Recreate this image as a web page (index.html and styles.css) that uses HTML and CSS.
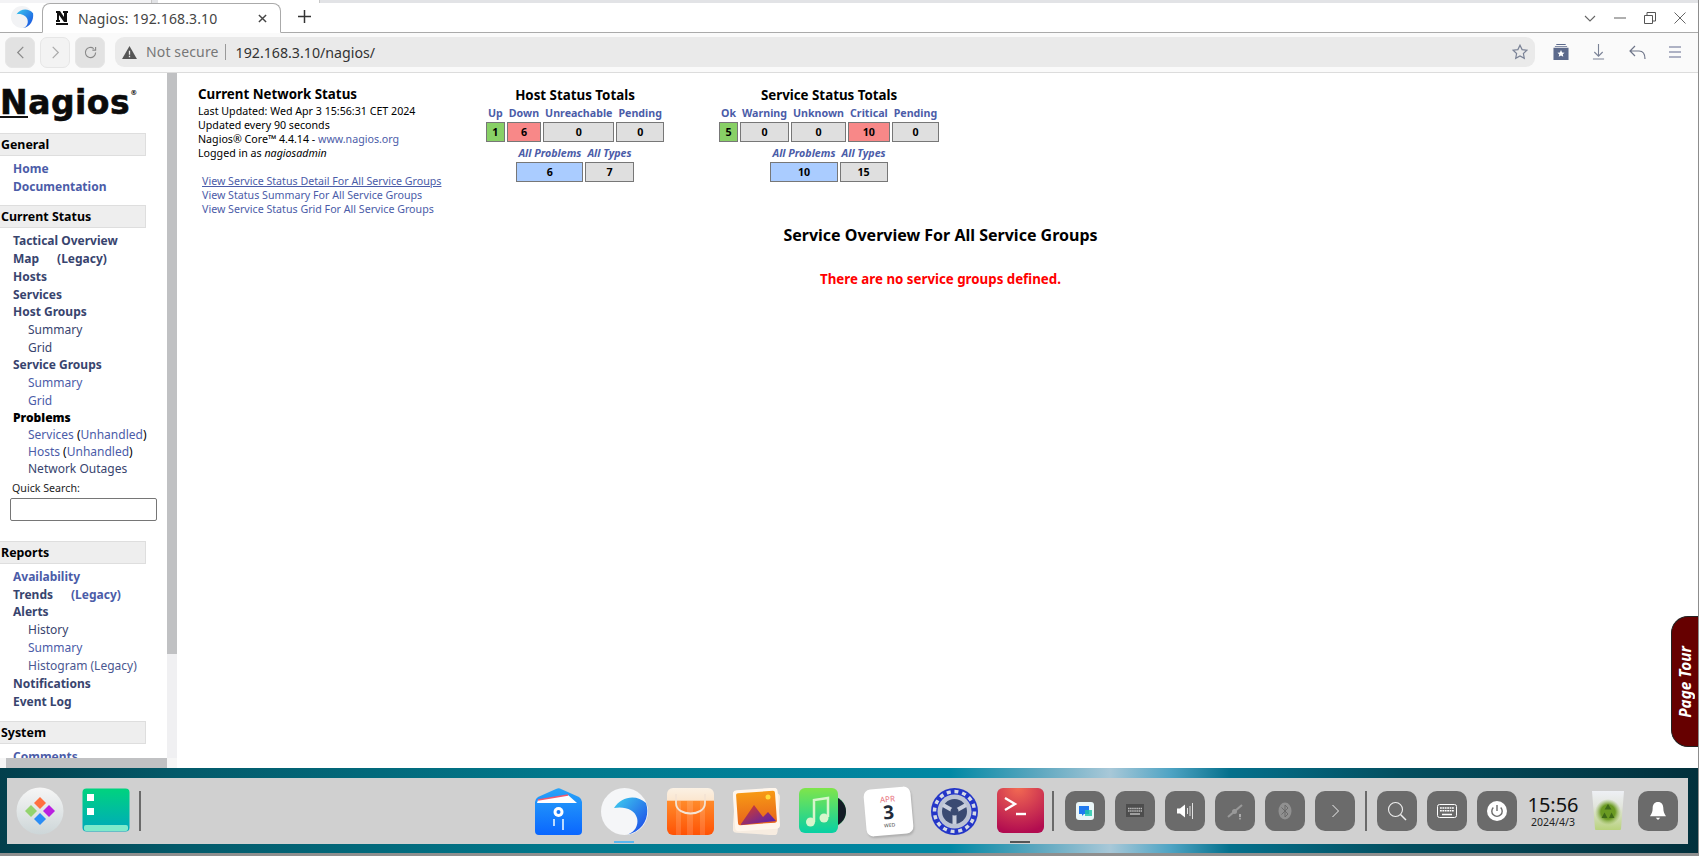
FILE: index.html
```html
<!DOCTYPE html>
<html lang="en">
<head>
<meta charset="utf-8">
<title>Nagios: 192.168.3.10</title>
<link rel="stylesheet" href="styles.css">
</head>
<body>
<div class="app">
  <div class="strip"><i class="s1"></i><i class="s2"></i><i class="s3"></i></div>
  <div class="tabbar">
    <svg class="brand" viewBox="0 0 26 26"><defs><linearGradient id="bw" x1="0" y1="0" x2="1" y2="1"><stop offset="0" stop-color="#3bc8ee"/><stop offset="1" stop-color="#1546e0"/></linearGradient></defs><circle cx="13" cy="13" r="12" fill="#f2f3f5"/><path d="M7 10C11 4 20 3 25 9c1 7-3 15-11 16 4-1 6-5 5-9-1-4-6-7-12-6z" fill="url(#bw)"/></svg>
    <div class="tab">
      <svg class="favicon" viewBox="0 0 12 14"><path d="M0 0h4l4 6V2H7V0h5v2h-1v9H8L3 4v5h1v2H0V9h1V2H0zM0 12h12v2H0z" fill="#111"/></svg>
      <span class="tab-title">Nagios: 192.168.3.10</span>
      <svg class="tab-close" viewBox="0 0 10 10"><path d="M1 1l8 8M9 1l-8 8" stroke="#444" stroke-width="1.6"/></svg>
    </div>
    <svg class="plus" viewBox="0 0 14 14"><path d="M7 0v14M0 7h14" stroke="#333" stroke-width="1.6"/></svg>
    <div class="winctl">
      <svg class="w-ic" viewBox="0 0 12 12"><path d="M1 4l5 5 5-5" fill="none" stroke="#666" stroke-width="1.1"/></svg>
      <svg class="w-ic" viewBox="0 0 14 12"><path d="M0 6h14" stroke="#555" stroke-width="1.1"/></svg>
      <svg class="w-ic" viewBox="0 0 12 12"><path d="M.5 3.5h8v8h-8zM3 3.500V.5h8.500v8.500H8.500" fill="none" stroke="#555"/></svg>
      <svg class="w-ic" viewBox="0 0 12 12"><path d="M.5.5l11 11M11.500.5l-11 11" stroke="#666" stroke-width="1"/></svg>
    </div>
  </div>
  <div class="toolbar">
    <button class="nav-btn on"><svg viewBox="0 0 8 14"><path d="M7 1L1 7l6 6" fill="none" stroke="#888" stroke-width="1.3"/></svg></button>
    <button class="nav-btn off"><svg viewBox="0 0 8 14"><path d="M1 1l6 6-6 6" fill="none" stroke="#aaa" stroke-width="1.3"/></svg></button>
    <button class="nav-btn on"><svg viewBox="0 0 14 14"><path d="M12.500 7A5.500 5.500 0 1 1 10.500 2.800M12.500 1v3.500H9" fill="none" stroke="#888" stroke-width="1.2"/></svg></button>
    <div class="urlbar">
      <svg class="warn" viewBox="0 0 16 14"><path d="M8 0l8 14H0z" fill="#555"/><path d="M7.300 5h1.400v4.500H7.300zM7.300 10.500h1.400V12H7.300z" fill="#eaeaea"/></svg>
      <span class="insecure">Not secure</span>
      <span class="url">192.168.3.10/nagios/</span>
      <svg class="star" viewBox="0 0 16 16"><path d="M8 1.200l2.100 4.400 4.800.6-3.500 3.300.9 4.800L8 12l-4.300 2.300.9-4.800L1.100 6.200l4.800-.6z" fill="none" stroke="#7a8296" stroke-width="1.200"/></svg>
    </div>
    <div class="tools">
      <svg class="t1" viewBox="0 0 16 17"><path d="M3 0h10v1H3zM1.500 2h13v1h-13zM0 4h16v13H0z" fill="#5c6a8c"/><path d="M8 6.500l1.200 2.400 2.600.3-1.900 1.800.5 2.600L8 12.300l-2.400 1.300.5-2.600-1.900-1.800 2.600-.3z" fill="#fff"/></svg>
      <svg class="t2" viewBox="0 0 14 17"><path d="M7 0v13M2.500 8.500L7 13l4.500-4.500M1 16h12" fill="none" stroke="#7a8296" stroke-width="1.200"/></svg>
      <svg class="t3" viewBox="0 0 17 15"><path d="M6 1L1 6l5 5M1 6h9c4 0 6 3 6 8" fill="none" stroke="#6d7488" stroke-width="1.200"/></svg>
      <svg class="t4" viewBox="0 0 12 12"><path d="M0 1h12M0 6h12M0 11h12" stroke="#aeb2c4" stroke-width="2"/></svg>
    </div>
  </div>

  <div class="page">
    <aside class="side">
      <div class="side-top">
        <nav class="nav">
          <div class="logo"><span class="logo-n">N</span>agios<sup class="logo-r">®</sup></div>

          <h2 class="sec">General</h2>
          <ul class="list pad4 gap9">
            <li class="m"><a>Home</a></li>
            <li class="m"><a>Documentation</a></li>
          </ul>

          <h2 class="sec">Current Status</h2>
          <ul class="list pad4">
            <li class="m"><a class="dk">Tactical Overview</a></li>
            <li class="m"><a class="dk">Map</a><a class="dk leg">(Legacy)</a></li>
            <li class="m"><a class="dk">Hosts</a></li>
            <li class="m tight"><a class="dk">Services</a></li>
            <li class="m"><a class="dk">Host Groups</a></li>
            <li class="s"><a class="dk">Summary</a></li>
            <li class="s tight"><a class="dk">Grid</a></li>
            <li class="m"><a class="dk">Service Groups</a></li>
            <li class="s"><a>Summary</a></li>
            <li class="s tight"><a>Grid</a></li>
            <li class="m tight"><b class="blk">Problems</b></li>
            <li class="s tight"><a>Services</a> (<a>Unhandled</a>)</li>
            <li class="s tight"><a>Hosts</a> (<a>Unhandled</a>)</li>
            <li class="s tight"><a class="dk">Network Outages</a></li>
          </ul>
          <form class="search">
            <label class="search-label" for="q">Quick Search:</label>
            <input id="q" class="search-in" type="text">
          </form>

          <h2 class="sec">Reports</h2>
          <ul class="list pad4 gap10">
            <li class="m mid"><a>Availability</a></li>
            <li class="m mid"><a class="dk">Trends</a><a class="leg">(Legacy)</a></li>
            <li class="m"><a class="dk">Alerts</a></li>
            <li class="s"><a class="dk">History</a></li>
            <li class="s"><a>Summary</a></li>
            <li class="s mid"><a class="dk2">Histogram (Legacy)</a></li>
            <li class="m"><a class="dk">Notifications</a></li>
            <li class="m"><a class="dk">Event Log</a></li>
          </ul>

          <h2 class="sec">System</h2>
          <ul class="list pad4">
            <li class="m"><a>Comments</a></li>
          </ul>
        </nav>
        <div class="vtrack"><div class="vthumb"></div></div>
      </div>
      <div class="htrack"><div class="hthumb"></div></div>
    </aside>

    <main class="main">
      <div class="top">
        <section class="info">
          <h1 class="info-title">Current Network Status</h1>
          <p class="ln">Last Updated: Wed Apr 3 15:56:31 CET 2024</p>
          <p class="ln">Updated every 90 seconds</p>
          <p class="ln">Nagios® Core™ 4.4.14 - <a>www.nagios.org</a></p>
          <p class="ln">Logged in as <i>nagiosadmin</i></p>
          <div class="links">
            <a class="ln u">View Service Status Detail For All Service Groups</a>
            <a class="ln">View Status Summary For All Service Groups</a>
            <a class="ln">View Service Status Grid For All Service Groups</a>
          </div>
        </section>

        <section class="totals">
          <h2 class="t-title">Host Status Totals</h2>
          <table class="t">
            <tr><th>Up</th><th>Down</th><th>Unreachable</th><th>Pending</th></tr>
            <tr><td class="ok">1</td><td class="bad">6</td><td>0</td><td>0</td></tr>
          </table>
          <table class="t t2nd">
            <tr><th class="it">All Problems</th><th class="it">All Types</th></tr>
            <tr><td class="prob">6</td><td>7</td></tr>
          </table>
        </section>

        <section class="totals svc">
          <h2 class="t-title">Service Status Totals</h2>
          <table class="t">
            <tr><th>Ok</th><th>Warning</th><th>Unknown</th><th>Critical</th><th>Pending</th></tr>
            <tr><td class="ok">5</td><td>0</td><td>0</td><td class="bad">10</td><td>0</td></tr>
          </table>
          <table class="t t2nd">
            <tr><th class="it">All Problems</th><th class="it">All Types</th></tr>
            <tr><td class="prob">10</td><td>15</td></tr>
          </table>
        </section>
      </div>
      <h2 class="overview">Service Overview For All Service Groups</h2>
      <p class="err">There are no service groups defined.</p>
      <div class="tour"><span class="tour-t">Page Tour</span></div>
    </main>
  </div>

  <div class="desk">
    <div class="dock">
      <svg class="launcher" viewBox="0 0 48 48"><defs><linearGradient id="lg" x1="0" y1="0" x2="0" y2="1"><stop offset="0" stop-color="#f6f6f6"/><stop offset="1" stop-color="#cdd6d8"/></linearGradient></defs><circle cx="24" cy="24" r="23.500" fill="url(#lg)"/><path d="M24 10l6 6-6 6-6-6z" fill="#ff7040"/><path d="M12 24l6-6 6 6-6 6z" fill="#93d36e" transform="translate(-3 0)"/><path d="M36 18l6 6-6 6-6-6z" fill="#b91fe0" transform="translate(-3 0)"/><path d="M24 26l6 6-6 6-6-6z" fill="#2a8df5"/></svg>
      <svg class="files" viewBox="0 0 48 48"><defs><linearGradient id="fg" x1="0" y1="0" x2="0" y2="1"><stop offset="0" stop-color="#00d37e"/><stop offset="1" stop-color="#00a9bd"/></linearGradient></defs><rect x=".5" y=".5" width="47" height="43" rx="4" fill="url(#fg)"/><rect x="5" y="6" width="7" height="7" fill="#fff"/><rect x="5" y="20" width="7" height="7" fill="#fff"/><rect x="2" y="37" width="44" height="6" rx="2" fill="#7eeacb"/></svg>
      <span class="sep"></span>

      <div class="apps">
        <svg class="app-ic" viewBox="0 0 47 47"><defs><linearGradient id="a1" x1="0" y1="0" x2="0" y2="1"><stop offset="0" stop-color="#29a4f8"/><stop offset="1" stop-color="#0a66ff"/></linearGradient></defs><path d="M3 9L21 1q3-1.500 5 0l18 8q3 2 3 5v29q0 4-4 4H4q-4 0-4-4V14q0-3 3-5z" fill="url(#a1)"/><path d="M2 15l1-3 30-5 9 8z" fill="#fff"/><path d="M3 12l30-5" fill="none" stroke="#f2586e" stroke-width="1.600"/><circle cx="23.500" cy="24" r="5" fill="#fff"/><circle cx="23.500" cy="24" r="2" fill="#1677f5"/><path d="M19 31v7M28 31v11" stroke="#cfe6ff" stroke-width="1.800"/></svg>
        <svg class="app-ic" viewBox="0 0 47 47"><defs><linearGradient id="a2" x1="0" y1="0" x2="1" y2="1"><stop offset="0" stop-color="#3fd0ee"/><stop offset="1" stop-color="#1a3fe8"/></linearGradient></defs><circle cx="23.500" cy="23.500" r="23.500" fill="#f5f6f8"/><path d="M13 20C20 8 36 6 45 15c4 12-1 28-20 32 8-2 13-9 11-17-2-8-12-12-23-10z" fill="url(#a2)"/></svg>
        <svg class="app-ic" viewBox="0 0 47 47"><defs><linearGradient id="a3" x1="0" y1="0" x2="0" y2="1"><stop offset="0" stop-color="#fbf1e4"/><stop offset=".26" stop-color="#fbe6cf"/><stop offset=".28" stop-color="#ff8a2a"/><stop offset="1" stop-color="#ff5205"/></linearGradient></defs><rect width="47" height="47" rx="6" fill="url(#a3)"/><path d="M9 13h5v34H9zM20 13h6v34h-6zM33 13h5v34h-5z" fill="#fff" opacity=".14"/><path d="M9 6v9c0 14 29 14 29 0V6" fill="none" stroke="#f4e4d4" stroke-width="1.800"/></svg>
        <svg class="app-ic" viewBox="0 0 47 47"><defs><linearGradient id="a4" x1="0" y1="0" x2="0" y2="1"><stop offset="0" stop-color="#f79a14"/><stop offset="1" stop-color="#e8641c"/></linearGradient><linearGradient id="a5" x1="0" y1="0" x2="1" y2="1"><stop offset="0" stop-color="#e0401c"/><stop offset="1" stop-color="#4a1cc0"/></linearGradient></defs><rect x="1" y="4" width="45" height="42" rx="4" fill="#f7ece0" transform="rotate(4 23 23)"/><rect x="1" y="1" width="45" height="41" rx="4" fill="#fff6ec" transform="rotate(-4 23 23)"/><rect x="4" y="4" width="39" height="32" rx="2" fill="url(#a4)" transform="rotate(-4 23 20)"/><path d="M8 36l13-19 9 12 5-5 8 9-35 4z" fill="url(#a5)"/><circle cx="35" cy="9" r="2.500" fill="#ffdb3a"/></svg>
        <svg class="app-ic" viewBox="0 0 47 47"><defs><linearGradient id="a6" x1="0" y1="0" x2="0" y2="1"><stop offset="0" stop-color="#7fe54a"/><stop offset="1" stop-color="#08d0a4"/></linearGradient></defs><circle cx="31" cy="23.500" r="16" fill="#2fae5e"/><circle cx="32" cy="23.500" r="15" fill="#141c26"/><rect width="39" height="45" rx="6" fill="url(#a6)"/><path d="M15 34V12l14-2v19" fill="none" stroke="#d8f5cc" stroke-width="2.500"/><circle cx="11.500" cy="34" r="4.500" fill="#d8f5cc"/><circle cx="25" cy="30" r="4.500" fill="#d8f5cc"/></svg>
        <div class="cal"><span class="cal-m">APR</span><span class="cal-d">3</span><span class="cal-w">WED</span></div>
        <svg class="app-ic" viewBox="0 0 47 47"><circle cx="23.500" cy="23.500" r="23.500" fill="#2436c8"/><circle cx="23.500" cy="23.500" r="20" fill="none" stroke="#d6dbe6" stroke-width="3.500" stroke-dasharray="4 3.800"/><circle cx="23.500" cy="23.500" r="17" fill="#bcc3d4"/><circle cx="23.500" cy="23.500" r="12.500" fill="#3a4a72"/><path d="M23.500 23.500L12 17M23.500 23.500L35 17M23.500 23.500V36" stroke="#c9cfdd" stroke-width="4"/><circle cx="23.500" cy="23.500" r="4" fill="#3a4a72"/></svg>
        <svg class="app-ic" viewBox="0 0 47 47"><defs><radialGradient id="a7" cx=".45" cy="0" r="1"><stop offset="0" stop-color="#f26a52"/><stop offset="1" stop-color="#b20c50"/></radialGradient></defs><rect width="47" height="45" rx="6" fill="url(#a7)"/><path d="M8 10l10 6-10 6" fill="none" stroke="#fff" stroke-width="2.400"/><path d="M19 26h10" stroke="#fff" stroke-width="2.400"/></svg>
        <i class="ind blue"></i>
        <i class="ind dark"></i>
      </div>
      <span class="sep sep2"></span>

      <div class="tiles">
        <div class="tile"><svg viewBox="0 0 18 18"><rect width="18" height="18" rx="3" fill="#eaf6f8"/><path d="M3 4h10v8H8l-2 2v-2H3z" fill="#1f7af0"/><path d="M9 8h7v6H9z" fill="#1cc8a6" opacity=".8"/></svg></div>
        <div class="tile"><svg viewBox="0 0 18 18"><rect y="2" width="18" height="13" fill="#4d4d4d"/><path d="M2 6.500h14M2 9h14" stroke="#bbb" stroke-width="1.300" stroke-dasharray="1.500 .6"/><path d="M4 12h10" stroke="#ccc" stroke-width="1.300"/></svg></div>
        <div class="tile"><svg viewBox="0 0 18 18"><path d="M1 6.500h3l5-4v13l-5-4H1z" fill="#fff"/><path d="M11.500 6v6M14 4v10M16.500 1v16" stroke="#eee" stroke-width=".9"/></svg></div>
        <div class="tile"><svg viewBox="0 0 18 18"><path d="M2 15L16 3" stroke="#999" stroke-width="2.200"/><circle cx="8.500" cy="9.500" r="2.500" fill="#999"/><path d="M14 12v3.200M14 16.200v1.200" stroke="#eee"/></svg></div>
        <div class="tile"><svg viewBox="0 0 18 18"><ellipse cx="9" cy="9" rx="6.500" ry="8.500" fill="#909090"/><path d="M5.500 5.500l6.500 6.500-3 3V3l3 3-6.500 6.500" fill="none" stroke="#666" stroke-width=".9"/></svg></div>
        <div class="tile"><svg viewBox="0 0 18 18"><path d="M6.500 3l6 6-6 6" fill="none" stroke="#eee" stroke-width="1"/></svg></div>
        <span class="sep sep3"></span>
        <div class="tile"><svg class="big" viewBox="0 0 20 20"><circle cx="8.500" cy="8.500" r="7" fill="none" stroke="#eee" stroke-width="1.100"/><path d="M13.500 13.500L19 19" stroke="#eee" stroke-width="1.500"/></svg></div>
        <div class="tile"><svg class="big" viewBox="0 0 20 20"><rect x=".5" y="3.500" width="19" height="13" rx="2" fill="none" stroke="#fff"/><path d="M3 7h14M3 9.800h14" stroke="#fff" stroke-width="1.600" stroke-dasharray="1.800 .6"/><path d="M5 13.500h10" stroke="#fff" stroke-width="1.500"/></svg></div>
        <div class="tile"><svg class="big" viewBox="0 0 20 20"><circle cx="10" cy="10" r="10" fill="#fff"/><path d="M6.300 6.500a5.200 5.200 0 1 0 7.400 0" fill="none" stroke="#6b6b6b" stroke-width="1.400"/><path d="M10 4v6" stroke="#6b6b6b" stroke-width="1.400"/></svg></div>
        <div class="clock"><span class="clock-t">15:56</span><span class="clock-d">2024/4/3</span></div>
        <svg class="trash" viewBox="0 0 32 40"><defs><linearGradient id="tr" x1="0" y1="0" x2="0" y2="1"><stop offset="0" stop-color="#eef0f5"/><stop offset=".4" stop-color="#e2e5dc"/><stop offset="1" stop-color="#b8d27c"/></linearGradient><radialGradient id="tr2"><stop offset=".55" stop-color="#6a9a22"/><stop offset="1" stop-color="#93b850" stop-opacity="0"/></radialGradient></defs><path d="M0 0h32l-3 38q0 1-1 1H4q-1 0-1-1z" fill="url(#tr)"/><circle cx="16" cy="21" r="13" fill="url(#tr2)"/><path d="M16 13l3.500 5.500h-7zM9.500 27l3-5.500 3 5.500zM22.500 27h-5.500l2.500-5.500z" fill="#3f6a18"/></svg>
        <div class="tile bell"><svg viewBox="0 0 18 22"><path d="M9 1c-4 0-6 3-6 7 0 4-1 6-3 9h18c-2-3-3-5-3-9 0-4-2-7-6-7z" fill="#fff"/><path d="M6.500 18.500h5L9 21z" fill="#fff"/></svg></div>
      </div>
    </div>
  </div>
</div>
</body>
</html>
```
FILE: styles.css
```css
* { box-sizing: border-box; }
html, body { margin: 0; padding: 0; height: 100%; overflow: hidden; background: #fff; }
body { font-family: "Noto Sans", sans-serif; color: #000; }
h1, h2, p, ul { margin: 0; padding: 0; }
ul { list-style: none; }
a { color: #4b5ca8; text-decoration: none; }

.app { width: 1699px; height: 856px; display: flex; flex-direction: column; border-right: 1px solid #8d8d8d; border-bottom: 3px solid #8f8f8f; }

/* chrome */
.strip { height: 3px; display: flex; flex: none; background: #e2e3e6; }
.s1 { width: 152px; background: #f3f3f5; border-right: 1px solid #c8c8c8; }
.s2 { width: 6px; }
.s3 { width: 162px; background: #fff; border-right: 1px solid #c8c8c8; }
.tabbar { height: 30px; flex: none; display: flex; align-items: flex-end; background: #fff; border-bottom: 1px solid #aaa; position: relative; }
.brand { width: 24px; height: 24px; margin: 0 8px 1px 10px; flex: none; align-self: center; }
.tab { width: 239px; height: 30px; margin-bottom: -1px; padding: 0 13px 0 13px; display: flex; align-items: center; background: #fff; border: 1px solid #aaa; border-bottom: 1px solid #fff; border-radius: 8px 8px 0 0; }
.favicon { width: 12px; height: 14px; flex: none; }
.tab-title { margin-left: 10px; font-size: 14px; color: #444; white-space: nowrap; letter-spacing: .01em; }
.tab-close { width: 9px; height: 9px; margin-left: auto; flex: none; }
.plus { width: 13px; height: 13px; margin: 0 0 9px 17px; flex: none; }
.winctl { margin-left: auto; height: 100%; display: flex; align-items: center; padding-right: 12px; }
.w-ic { width: 12px; height: 12px; margin-left: 18px; flex: none; }
.toolbar { height: 40px; flex: none; display: flex; align-items: center; padding: 0 0 1px 5px; background: #fafafa; border-bottom: 1px solid #dcdcdc; }
.nav-btn { width: 30px; height: 31px; margin-right: 5px; padding: 0; display: flex; align-items: center; justify-content: center; border: 1px solid #e6e6e6; border-radius: 7px; }
.nav-btn svg { height: 13px; width: 13px; }
.on { background: #e2e2e2; }
.off { background: #f3f3f3; }
.urlbar { width: 1420px; height: 30px; margin-left: 5px; padding: 0 7px; display: flex; align-items: center; background: #eaeaea; border-radius: 9px; flex: none; }
.warn { width: 15px; height: 13px; flex: none; }
.insecure { margin-left: 9px; padding-right: 6px; font-size: 14px; color: #777; border-right: 1px solid #999; line-height: 16px; letter-spacing: .01em; }
.url { margin-left: 10px; font-size: 14.200px; color: #333; }
.star { width: 16px; height: 16px; margin-left: auto; }
.tools { flex: 1; display: flex; align-items: center; padding-left: 18px; }
.t1 { width: 16px; height: 16px; }
.t2 { width: 13px; height: 16px; margin-left: 23px; }
.t3 { width: 17px; height: 15px; margin-left: 24px; }
.t4 { width: 12px; height: 12px; margin-left: 23px; }

/* page */
.page { flex: 1; min-height: 0; display: flex; }
.side { width: 177px; flex: none; display: flex; flex-direction: column; }
.side-top { flex: 1; min-height: 0; display: flex; }
.nav { width: 167px; overflow: hidden; flex: none; }
.vtrack { width: 10px; background: #f0f0f2; }
.vthumb { height: 581px; background: #c0c1c3; }
.htrack { height: 10px; padding-left: 6px; background: #f6f6f6; }
.hthumb { width: 161px; height: 100%; background: #c0c1c3; }

.logo { height: 60px; padding-top: 11px; font-family: "DejaVu Sans", sans-serif; font-weight: 700; font-size: 33px; line-height: 38px; letter-spacing: .5px; color: #0b0b0b; white-space: nowrap; -webkit-text-stroke: .6px #0b0b0b; }
.logo-n { display: inline-block; height: 34px; border-bottom: 2px solid #111; }
.logo-r { font-size: 7px; line-height: 0; vertical-align: 19px; -webkit-text-stroke: 0; }

.sec { width: 146px; height: 23px; padding-left: 1px; font-size: 12.400px; font-weight: 700; line-height: 21px; background: #eee; border: 1px solid #dedede; border-left: 0; }
.list { padding: 3px 0 0 13px; font-size: 12px; margin-bottom: 7px; }
.gap9 { margin-bottom: 9px; }
.gap10 { margin-bottom: 10px; }
.pad4 { padding-top: 4px; }
.m { height: 18px; line-height: 18px; font-weight: 700; white-space: nowrap; }
.s { height: 18px; line-height: 18px; padding-left: 15px; white-space: nowrap; }
.tight { height: 17px; line-height: 17px; }
.mid { height: 17.500px; line-height: 17.500px; }
.dk { color: #38446e; }
.dk2 { color: #4a5790; }
.blk { color: #000; }
.leg { margin-left: 18px; }

.search { margin: -4px 0 20px 12px; }
.search-label { display: block; font-size: 10.670px; line-height: 16px; color: #222; }
.search-in { display: block; width: 147px; height: 23px; margin: 2px 0 0 -2px; background: #fff; border: 1px solid #767676; border-radius: 2px; }

.main { flex: 1; min-width: 0; position: relative; padding-top: 12px; }
.top { display: flex; padding-left: 21px; height: 139px; }
.info { width: 286px; flex: none; }
.info-title { font-size: 13.330px; font-weight: 700; line-height: 19px; }
.ln { display: block; font-size: 10.670px; line-height: 14px; white-space: nowrap; }
.links { margin-top: 14px; padding-left: 4px; }
.u { text-decoration: underline; }
.totals { flex: none; }
.svc { margin-left: 51px; }
.t-title { font-size: 13.330px; font-weight: 700; line-height: 20px; text-align: center; margin-bottom: -1px; }
.t { border-collapse: separate; border-spacing: 2px; font-size: 10.670px; font-weight: 700; margin: 0 auto; }
.t th { padding: 0 2px; font-weight: 700; color: #4b5ca8; line-height: 14px; white-space: nowrap; }
.t th.it { font-style: italic; }
.t td { height: 20px; padding: 0; text-align: center; background: #dfdfdf; border: 1px solid #777; line-height: 16px; }
.t td.ok { background: #88d066; }
.t td.bad { background: #f88888; }
.t td.prob { background: #aaccff; }

.overview { margin-left: 6px; font-size: 16px; font-weight: 700; line-height: 22px; text-align: center; }
.err { margin-top: 23px; margin-left: 6px; font-size: 13.300px; font-weight: 700; line-height: 20px; color: #f00; text-align: center; }
.tour { position: absolute; right: 0; top: 543px; width: 27px; height: 131px; display: flex; align-items: center; justify-content: center; background: #660000; border: 1px solid #222; border-right: 0; border-radius: 17px 0 0 17px; }
.tour-t { writing-mode: vertical-rl; transform: rotate(180deg); color: #fff; font-size: 15.300px; font-weight: 700; font-style: italic; white-space: nowrap; }

/* desktop */
.desk { height: 85px; flex: none; padding: 10px 10px 9px 7px; background: linear-gradient(90deg, #023f4c 0, #035a6a 180px, #01788c 560px, #0088a4 950px, #5fa8c0 1040px, #a8c8d8 1110px, #4fa4c4 1170px, #04708c 1230px, #034f60 1400px, #02303c 1699px); }
.dock { height: 66px; display: flex; align-items: center; background: #d0d0d0; position: relative; padding-left: 9px; }
.launcher { width: 48px; height: 48px; flex: none; }
.files { width: 48px; height: 48px; margin: 2px 0 0 18px; flex: none; }
.sep { width: 2px; height: 40px; margin-left: 9px; background: #6a6a6a; flex: none; }
.apps { display: flex; gap: 19px; margin-left: 394px; flex: none; }
.app-ic { width: 47px; height: 47px; flex: none; }
.cal { width: 47px; height: 47px; flex: none; display: flex; flex-direction: column; align-items: center; background: #fff; border-radius: 7px; transform: rotate(-5deg); box-shadow: 1px 2px 2px #b0b0b0; font-family: "Noto Sans", sans-serif; }
.cal-m { font-size: 8px; line-height: 9px; margin-top: 6px; color: #e8707c; }
.cal-d { font-size: 19px; font-weight: 700; line-height: 19px; color: #222b3a; }
.cal-w { font-size: 5px; line-height: 7px; color: #444; }
.ind { position: absolute; top: 63px; width: 20px; height: 2px; }
.ind.blue { left: 607px; background: #5bb8f0; }
.ind.dark { left: 1003px; background: #555; }
.sep2 { margin-left: 8px; }
.tiles { display: flex; align-items: center; margin-left: 11px; flex: none; }
.tile { width: 40px; height: 40px; margin-right: 10px; display: flex; align-items: center; justify-content: center; background: #6b6b6b; border-radius: 10px; flex: none; }
.tile svg { width: 18px; height: 18px; }
.tile svg.big { width: 20px; height: 20px; }
.sep3 { margin: 0 10px 0 0; height: 40px; }
.clock { width: 50px; margin: 0 14px 0 1px; display: flex; flex-direction: column; align-items: center; flex: none; }
.clock-t { font-size: 20px; line-height: 23px; color: #111; }
.clock-d { font-size: 10.500px; line-height: 13px; color: #222; }
.trash { width: 32px; height: 40px; flex: none; }
.bell { margin: 0 0 0 14px; }
.bell svg { width: 16px; height: 20px; }
```
